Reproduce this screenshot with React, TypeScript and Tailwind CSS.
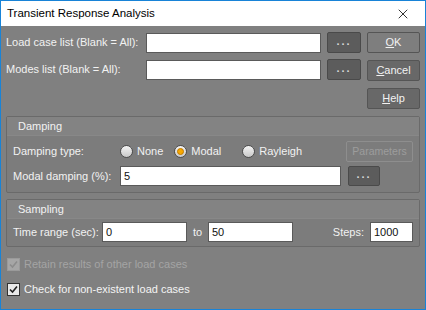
import { X } from 'lucide-react'

const font = { fontFamily: '"Liberation Sans", Arial, sans-serif' }

function Dots({ className = '' }: { className?: string }) {
  return (
    <button
      className={`flex shrink-0 items-center justify-center rounded-[2px] border border-[#4a4a4a] bg-[#5c5c5c] pb-[3px] text-[11px] font-bold tracking-[2px] text-[#d8d8d8] ${className}`}
    >
      ...
    </button>
  )
}

function Radio({ label, checked = false }: { label: string; checked?: boolean }) {
  return (
    <span className="flex items-center gap-[4px] whitespace-nowrap">
      <span className="flex h-[13px] w-[13px] items-center justify-center rounded-full border border-[#4d4d4d] bg-gradient-to-b from-[#f4f4f4] to-[#c8c8c8]">
        {checked && <span className="h-[7px] w-[7px] rounded-full border border-[#c07a00] bg-[#f6a800]" />}
      </span>
      <span className="text-[#f2f2f2]">{label}</span>
    </span>
  )
}

function Check({ label, disabled = false }: { label: string; disabled?: boolean }) {
  return (
    <div className="flex h-[14px] items-center gap-[4px]">
      <span
        className={`flex h-[13px] w-[13px] items-center justify-center border ${
          disabled ? 'border-[#9a9a9a] bg-[#a6a6a6]' : 'border-[#333] bg-[#e8e8e8]'
        }`}
      >
        <svg width="9" height="9" viewBox="0 0 9 9">
          <path d="M1 4.5 L3.5 7 L8 1.5" fill="none" stroke={disabled ? '#8c8c8c' : '#202020'} strokeWidth="1.6" />
        </svg>
      </span>
      <span className={disabled ? 'text-[#a4a4a4]' : 'text-[#f4f4f4]'}>{label}</span>
    </div>
  )
}

function Field({ value = '', className = '' }: { value?: string; className?: string }) {
  return (
    <div className={`flex h-[20px] shrink-0 items-center border border-[#5a5a5a] bg-white px-[3px] text-[#111] ${className}`}>
      {value}
    </div>
  )
}

function Group({ title, children }: { title: string; children: React.ReactNode }) {
  return (
    <div className="rounded-[2px] border border-[#6a6a6a] bg-[#7c7c7c]">
      <div className="flex h-[19px] items-center border-b border-[#888] bg-[#838383] pl-[11px] text-[#f2f2f2]">
        {title}
      </div>
      {children}
    </div>
  )
}

function DlgButton({ children, light = false }: { children: React.ReactNode; light?: boolean }) {
  return (
    <button
      className={`flex h-[21px] w-[53px] items-center justify-center rounded-[2px] border border-[#555] text-[#f2f2f2] ${
        light ? 'bg-[#7e7e7e]' : 'bg-[#686868]'
      }`}
    >
      {children}
    </button>
  )
}

export default function App() {
  return (
    <div className="flex h-[310px] w-[426px] flex-col border border-[#1883d7] text-[11px]" style={font}>
      {/* Title bar */}
      <div className="flex h-[25px] shrink-0 items-center justify-between bg-white pl-[6px] pr-[14px]">
        <span className="text-[11.5px] text-black">Transient Response Analysis</span>
        <X size={16} strokeWidth={1.2} className="text-black" />
      </div>

      <div className="flex flex-1 flex-col whitespace-nowrap bg-[#808080] px-[5px] pt-[6px]">
        {/* Top */}
        <div className="flex gap-[6px]">
          <div className="flex w-[355px] flex-col gap-[6px]">
            <div className="flex h-[21px] items-center">
              <span className="w-[140px] shrink-0 text-[#f2f2f2]">Load case list (Blank = All):</span>
              <Field className="w-[175px]" />
              <Dots className="ml-[6px] h-[21px] w-[34px]" />
            </div>
            <div className="flex h-[21px] items-center">
              <span className="w-[140px] shrink-0 text-[#f2f2f2]">Modes list (Blank = All):</span>
              <Field className="w-[175px]" />
              <Dots className="ml-[6px] h-[21px] w-[34px]" />
            </div>
          </div>
          <div className="flex flex-col gap-[7px]">
            <DlgButton light>
              <span className="underline">O</span>K
            </DlgButton>
            <DlgButton>
              <span className="underline">C</span>ancel
            </DlgButton>
            <DlgButton>
              <span className="underline">H</span>elp
            </DlgButton>
          </div>
        </div>

        {/* Damping */}
        <div className="mt-[7px]">
          <Group title="Damping">
            <div className="flex flex-col gap-[4px] px-[6px] pb-[6px] pt-[5px]">
              <div className="flex h-[21px] items-center">
                <span className="w-[107px] shrink-0 text-[#f2f2f2]">Damping type:</span>
                <div className="flex gap-[11px]">
                  <Radio label="None" />
                  <Radio label="Modal" checked />
                  <span className="ml-[10px]">
                    <Radio label="Rayleigh" />
                  </span>
                </div>
                <button className="ml-auto flex h-[21px] w-[67px] items-center justify-center rounded-[2px] border border-[#8e8e8e] text-[10.5px] text-[#9c9c9c]">
                  Parameters
                </button>
              </div>
              <div className="flex h-[20px] items-center">
                <span className="w-[107px] shrink-0 text-[#f2f2f2]">Modal damping (%):</span>
                <Field value="5" className="w-[221px]" />
                <Dots className="ml-[7px] h-[20px] w-[32px]" />
              </div>
            </div>
          </Group>
        </div>

        {/* Sampling */}
        <div className="mt-[6px]">
          <Group title="Sampling">
            <div className="flex h-[27px] items-center px-[6px] pb-[3px] pt-[2px]">
              <span className="w-[89px] shrink-0 text-[#f2f2f2]">Time range (sec):</span>
              <Field value="0" className="w-[85px]" />
              <span className="w-[21px] text-center text-[#f2f2f2]">to</span>
              <Field value="50" className="w-[85px]" />
              <span className="ml-auto mr-[6px] text-[#f2f2f2]">Steps:</span>
              <Field value="1000" className="w-[43px]" />
            </div>
          </Group>
        </div>

        <div className="mt-[10px] flex flex-col gap-[11px] pl-[1px]">
          <Check label="Retain results of other load cases" disabled />
          <Check label="Check for non-existent load cases" />
        </div>
      </div>
    </div>
  )
}
